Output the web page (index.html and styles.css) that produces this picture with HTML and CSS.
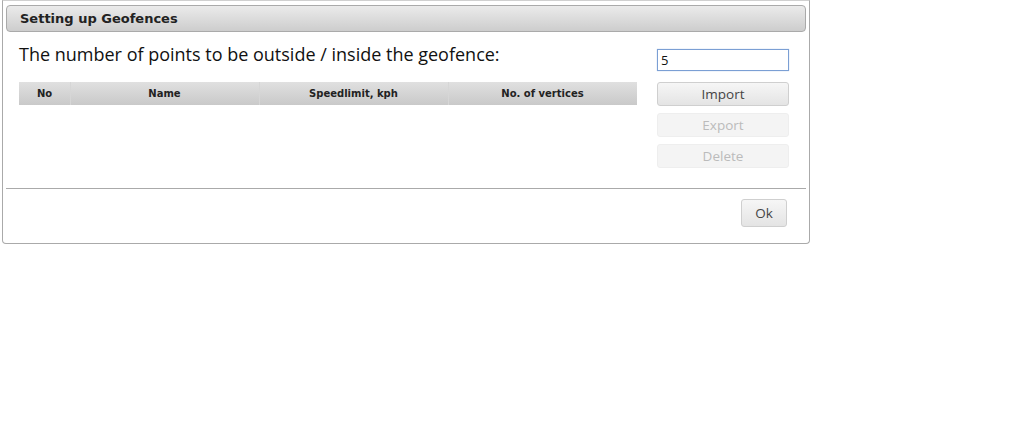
FILE: index.html
```html
<!DOCTYPE html>
<html lang="en">
<head>
    <meta charset="UTF-8">
    <title>Setting up Geofences</title>
    <link rel="stylesheet" href="styles.css">
</head>
<body>
    <div class="page">
        <div class="dialog">
            <div class="dialog-title">Setting up Geofences</div>
            <div class="dialog-body">
                <div class="left-col">
                    <div class="prompt">The number of points to be outside / inside the geofence:</div>
                    <table class="grid">
                        <thead>
                            <tr>
                                <th class="col-no">No</th>
                                <th class="col-name">Name</th>
                                <th class="col-speed">Speedlimit, kph</th>
                                <th class="col-vert">No. of vertices</th>
                            </tr>
                        </thead>
                    </table>
                </div>
                <div class="right-col">
                    <input type="text" class="points-input" value="5">
                    <button class="btn">Import</button>
                    <button class="btn" disabled>Export</button>
                    <button class="btn" disabled>Delete</button>
                </div>
            </div>
            <div class="dialog-footer">
                <button class="btn btn-ok">Ok</button>
            </div>
        </div>
    </div>
</body>
</html>
```

FILE: styles.css
```css
body, html {
    margin: 0;
    padding: 0;
    background: #ffffff;
    font-family: "Open Sans", "DejaVu Sans", sans-serif;
}

.page {
    position: relative;
    width: 1022px;
    height: 439px;
}

.dialog {
    position: absolute;
    left: 2px;
    top: 0;
    width: 808px;
    height: 244px;
    background: #ffffff;
    border: 1px solid #aaaaaa;
    border-top-color: #d0d0d0;
    border-radius: 0 0 4px 4px;
    box-sizing: border-box;
    padding: 4px 3px 0 3px;
    display: flex;
    flex-direction: column;
}

.dialog-title {
    height: 27px;
    box-sizing: border-box;
    border: 1px solid #aaaaaa;
    border-radius: 4px;
    background: linear-gradient(#ebebeb, #cdcdcd);
    font-family: "DejaVu Sans", Verdana, sans-serif;
    font-size: 13px;
    font-weight: bold;
    color: #222222;
    line-height: 25px;
    padding-left: 13px;
}

.dialog-body {
    display: flex;
    justify-content: space-between;
    padding: 10px 17px 0 13px;
    height: 157px;
    border-bottom: 1px solid #aaaaaa;
    box-sizing: border-box;
}

.left-col {
    width: 618px;
}

.prompt {
    font-size: 18px;
    color: #111111;
    line-height: 24px;
    height: 40px;
}

.grid {
    width: 618px;
    border-collapse: collapse;
    table-layout: fixed;
}

.grid th {
    height: 23px;
    padding: 0;
    background: linear-gradient(#e0e0e0, #c9c9c9);
    font-family: "DejaVu Sans", Verdana, sans-serif;
    font-size: 10px;
    font-weight: bold;
    color: #222222;
    text-align: center;
    box-shadow: inset 1px 0 0 #d6d6d6;
}

.grid th:first-child {
    box-shadow: none;
}

.col-no { width: 51px; }
.col-name { width: 189px; }
.col-speed { width: 189px; }
.col-vert { width: 189px; }

.right-col {
    width: 132px;
    display: flex;
    flex-direction: column;
    gap: 7px;
    padding-top: 7px;
}

.points-input {
    height: 22px;
    box-sizing: border-box;
    border: 1px solid #7b9fd4;
    box-shadow: 0 0 1px #a9c2e8;
    padding: 0 3px;
    font-family: "Open Sans", sans-serif;
    font-size: 13px;
    color: #111111;
    outline: none;
    margin-bottom: 4px;
}

.btn {
    height: 24px;
    box-sizing: border-box;
    border: 1px solid #cfcfcf;
    border-radius: 3px;
    background: linear-gradient(#f6f6f6, #e4e4e4);
    font-family: "Open Sans", sans-serif;
    font-size: 13.5px;
    color: #444444;
    padding: 0;
}

.btn:disabled {
    border-color: #eeeeee;
    background: #f4f4f4;
    color: #bbbbbb;
}

.dialog-footer {
    display: flex;
    justify-content: flex-end;
    padding: 10px 19px 0 0;
}

.btn-ok {
    width: 46px;
    height: 28px;
}
```
